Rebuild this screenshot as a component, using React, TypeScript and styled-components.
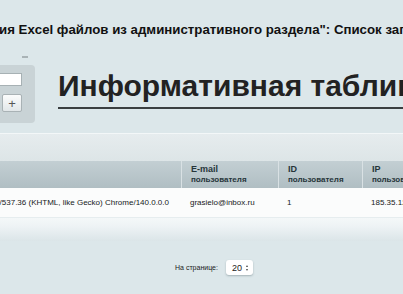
import React from 'react';
import styled, { createGlobalStyle } from 'styled-components';

const GlobalStyle = createGlobalStyle`
    html, body {
        margin: 0;
        padding: 0;
        background-color: #dce7ea;
        font-family: "Liberation Sans", Arial, sans-serif;
        overflow: hidden;
    }
`;

interface Column {
    title: string;
    sub: string;
    width: number;
}

const columns: Column[] = [
    { title: '', sub: '', width: 181 },
    { title: 'E-mail', sub: 'пользователя', width: 97 },
    { title: 'ID', sub: 'пользователя', width: 84 },
    { title: 'IP', sub: 'пользователя', width: 120 }
];

const row = [
    'Mozilla/5.0 (Windows NT 10.0; Win64; x64) AppleWebKit/537.36 (KHTML, like Gecko) Chrome/140.0.0.0',
    'grasielo@inbox.ru',
    '1',
    '185.35.128.14'
];

const App = () => {
    return (
        <Page>
            <GlobalStyle />
            <PageTitle>ия Excel файлов из административного раздела": Список загрузок</PageTitle>
            <Dash />
            <TopRow>
                <SidePanel>
                    <SmallInput type="text" />
                    <PlusButton>+</PlusButton>
                </SidePanel>
                <Heading>Информативная таблица</Heading>
            </TopRow>
            <Card>
                <Toolbar />
                <Grid>
                    {columns.map((col, i) => (
                        <HeadCell key={i}>
                            <b>{col.title}</b>
                            <span>{col.sub}</span>
                        </HeadCell>
                    ))}
                    {row.map((value, i) => (
                        <BodyCell key={i} $first={i === 0}>
                            <span>{value}</span>
                        </BodyCell>
                    ))}
                </Grid>
                <CardBottom />
            </Card>
            <Footer>
                <FooterLabel>На странице:</FooterLabel>
                <PageSelect>
                    <span>20</span>
                    <Arrows>
                        <i />
                        <i />
                    </Arrows>
                </PageSelect>
            </Footer>
        </Page>
    );
};

const Page = styled.div`
    display: flex;
    flex-direction: column;
    width: 403px;
    height: 294px;
    overflow: hidden;
    padding-top: 22px;
    box-sizing: border-box;
`;

const PageTitle = styled.div`
    font-size: 13.25px;
    line-height: 16px;
    font-weight: bold;
    color: #111;
    white-space: nowrap;
    overflow: hidden;
    margin-left: -1px;
`;

const Dash = styled.div`
    width: 6px;
    height: 2px;
    margin: 18px 0 0 22px;
    background-color: #a9b3b6;
`;

const TopRow = styled.div`
    display: flex;
    align-items: flex-start;
    margin-top: 7px;
`;

const SidePanel = styled.div`
    display: flex;
    flex-direction: column;
    align-items: flex-end;
    gap: 8px;
    width: 35px;
    height: 58px;
    padding: 8px 13px 0 0;
    box-sizing: border-box;
    flex-shrink: 0;
    background-color: #c9d3d6;
    border-radius: 0 4px 4px 0;
`;

const SmallInput = styled.input`
    width: 24px;
    height: 13px;
    margin: 0 0 0 -2px;
    padding: 0;
    box-sizing: border-box;
    border: 1px solid #a7b1b4;
    border-left: none;
    background-color: #fff;
    outline: none;
`;

const PlusButton = styled.button`
    width: 20px;
    height: 18px;
    padding: 0;
    box-sizing: border-box;
    border: 1px solid #a9b2b5;
    border-radius: 2px;
    background: linear-gradient(#fbfcfc, #e2e7e9);
    color: #555;
    font-family: "Liberation Sans", Arial, sans-serif;
    font-size: 13px;
    line-height: 15px;
`;

const Heading = styled.h1`
    margin: 4px 0 0 23px;
    padding-bottom: 4px;
    flex: 1;
    font-size: 30px;
    line-height: 34px;
    font-weight: bold;
    color: #222;
    white-space: nowrap;
    overflow: hidden;
    border-bottom: 2px solid #3a3f41;
`;

const Card = styled.div`
    display: flex;
    flex-direction: column;
    margin-top: 10px;
    border-top: 1px solid #f3f7f8;
`;

const Toolbar = styled.div`
    height: 27px;
    background: linear-gradient(#e6ecee, #dde5e7);
`;

const Grid = styled.div`
    display: grid;
    grid-template-columns: 181px 97px 84px 120px;
    width: 482px;
`;

const HeadCell = styled.div`
    display: flex;
    flex-direction: column;
    justify-content: center;
    height: 27px;
    padding-left: 9px;
    box-sizing: border-box;
    background: linear-gradient(#c3cfd3, #b0bec3);
    border-left: 1px solid #d9e1e4;
    color: #26353a;
    font-size: 8px;
    line-height: 9.5px;

    &:first-child {
        border-left: none;
    }

    & > b {
        font-size: 9px;
    }

    & > span {
        font-weight: bold;
    }
`;

const BodyCell = styled.div<{ $first?: boolean }>`
    display: flex;
    align-items: center;
    justify-content: ${(p) => (p.$first ? 'flex-end' : 'flex-start')};
    height: 30px;
    padding: ${(p) => (p.$first ? '0 12px 0 0' : '0 0 0 9px')};
    box-sizing: border-box;
    overflow: hidden;
    white-space: nowrap;
    background-color: #fbfcfc;
    border-bottom: 1px solid #e6edef;
    color: #16191b;
    font-size: 8px;

    & > span {
        flex-shrink: 0;
    }
`;

const CardBottom = styled.div`
    height: 23px;
    background: linear-gradient(#f4f8f9, #eef3f5 35%, #dbe5e8);
`;

const Footer = styled.div`
    display: flex;
    align-items: center;
    gap: 8px;
    margin-top: 19px;
    padding-left: 175px;
`;

const FooterLabel = styled.span`
    font-size: 7px;
    color: #222;
`;

const PageSelect = styled.div`
    display: flex;
    align-items: center;
    justify-content: space-between;
    width: 27px;
    height: 15px;
    padding: 0 5px 0 6px;
    box-sizing: border-box;
    background-color: #fff;
    border-radius: 3px;
    box-shadow: 0 1px 2px rgba(60, 80, 90, 0.35);
    font-size: 9px;
    color: #222;
`;

const Arrows = styled.div`
    display: flex;
    flex-direction: column;
    gap: 2px;

    & > i {
        display: block;
        width: 0;
        height: 0;
        border-left: 1.5px solid transparent;
        border-right: 1.5px solid transparent;
    }

    & > i:first-child {
        border-bottom: 2px solid #444;
    }

    & > i:last-child {
        border-top: 2px solid #444;
    }
`;

export default App;
